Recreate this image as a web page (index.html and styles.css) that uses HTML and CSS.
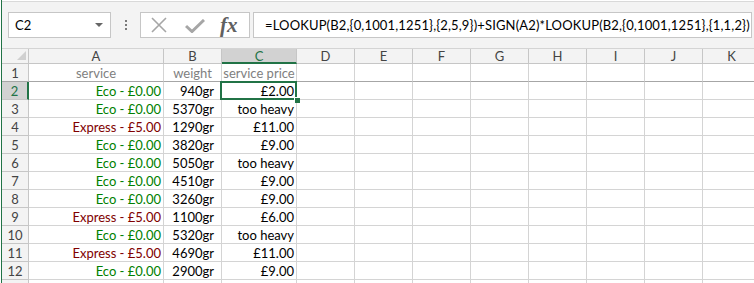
FILE: index.html
```html
<!DOCTYPE html>
<html lang="en">
<head>
    <meta charset="UTF-8">
    <title>Shipping prices</title>
    <link rel="stylesheet" href="styles.css">
</head>
<body>
    <div class="app">
        <div class="toolbar">
            <div class="name-box">
                <span>C2</span>
                <span class="name-arrow"></span>
            </div>
            <div class="grip"><i></i><i></i><i></i></div>
            <div class="fx-box">
                <svg class="icon-cancel" width="18" height="16" viewBox="0 0 18 16">
                    <path d="M2 1 L16 15 M16 1 L2 15" stroke="#a6a6a6" stroke-width="1.6" fill="none"/>
                </svg>
                <svg class="icon-enter" width="20" height="14" viewBox="0 0 20 14">
                    <path d="M1 7 L7 12.5 L19 1" stroke="#a6a6a6" stroke-width="3" fill="none"/>
                </svg>
                <span class="fx">fx</span>
            </div>
            <div class="formula">=LOOKUP(B2,{0,1001,1251},{2,5,9})+SIGN(A2)*LOOKUP(B2,{0,1001,1251},{1,1,2})</div>
        </div>

        <div class="sheet">
            <!-- column headers -->
            <div class="cell corner"><span class="corner-mark"></span></div>
            <div class="cell col-head">A</div>
            <div class="cell col-head">B</div>
            <div class="cell col-head active">C</div>
            <div class="cell col-head">D</div>
            <div class="cell col-head">E</div>
            <div class="cell col-head">F</div>
            <div class="cell col-head">G</div>
            <div class="cell col-head">H</div>
            <div class="cell col-head">I</div>
            <div class="cell col-head">J</div>
            <div class="cell col-head">K</div>

            <!-- title row -->
            <div class="cell row-head freeze">1</div>
            <div class="cell title freeze">service</div>
            <div class="cell title freeze">weight</div>
            <div class="cell title freeze">service price</div>
            <div class="cell freeze"></div><div class="cell freeze"></div><div class="cell freeze"></div><div class="cell freeze"></div>
            <div class="cell freeze"></div><div class="cell freeze"></div><div class="cell freeze"></div><div class="cell freeze"></div>
        </div>
    </div>

    <script>
        var rows = [
            ['eco', 940, '£2.00'],
            ['eco', 5370, 'too heavy'],
            ['express', 1290, '£11.00'],
            ['eco', 3820, '£9.00'],
            ['eco', 5050, 'too heavy'],
            ['eco', 4510, '£9.00'],
            ['eco', 3260, '£9.00'],
            ['express', 1100, '£6.00'],
            ['eco', 5320, 'too heavy'],
            ['express', 4690, '£11.00'],
            ['eco', 2900, '£9.00']
        ];

        var sheet = document.querySelector('.sheet');
        var html = '';

        rows.forEach(function(row, i) {
            var num = i + 2;
            var service = row[0] === 'eco' ? 'Eco - £0.00' : 'Express - £5.00';
            html += '<div class="cell row-head' + (num === 2 ? ' active' : '') + '">' + num + '</div>';
            html += '<div class="cell service ' + row[0] + '">' + service + '</div>';
            html += '<div class="cell weight">' + row[1] + 'gr</div>';
            html += '<div class="cell price' + (num === 2 ? ' selected' : '') + '">' + row[2] + '</div>';
            for (var c = 0; c < 8; c++) {
                html += '<div class="cell"></div>';
            }
        });

        // top edge of the next row, label hidden below the window
        html += '<div class="cell row-head"></div>';
        for (var c = 0; c < 11; c++) {
            html += '<div class="cell"></div>';
        }

        sheet.insertAdjacentHTML('beforeend', html);
    </script>
</body>
</html>
```

FILE: styles.css
```css
body {
    margin: 0;
    background-color: #ffffff;
    font-family: Lato, "Open Sans", sans-serif;
    font-size: 13px;
    color: #000000;
    overflow: hidden;
}
.app {
    margin-left: 1px;
    border-left: 1px solid #217346;
    height: 100vh;
    overflow: hidden;
}

/* formula bar */
.toolbar {
    display: flex;
    align-items: flex-start;
    box-sizing: border-box;
    height: 48px;
    margin-top: 1px;
    padding-top: 10px;
    background-color: #f3f3f3;
    border-top: 1px solid #d9d9d9;
    border-bottom: 1px solid #d4d4d4;
}
.name-box {
    display: flex;
    align-items: center;
    justify-content: space-between;
    box-sizing: border-box;
    width: 103px;
    height: 26px;
    margin-left: 6px;
    padding: 0 7px 0 6px;
    background-color: #ffffff;
    border: 1px solid #c6c6c6;
}
.name-arrow {
    width: 0;
    height: 0;
    border-left: 4px solid transparent;
    border-right: 4px solid transparent;
    border-top: 4px solid #666666;
}
.grip {
    display: flex;
    flex-direction: column;
    gap: 2px;
    width: 2px;
    margin: 8px 13px 0 14px;
}
.grip i {
    display: block;
    width: 2px;
    height: 2px;
    background-color: #7a7a7a;
}
.fx-box {
    display: flex;
    align-items: center;
    box-sizing: border-box;
    width: 110px;
    height: 26px;
    padding-left: 9px;
    background-color: #ffffff;
    border: 1px solid #c6c6c6;
}
.icon-enter {
    margin-left: 17px;
    margin-top: 2px;
}
.fx {
    margin-left: 15px;
    font-family: "Liberation Serif", serif;
    font-style: italic;
    font-weight: bold;
    font-size: 21px;
    color: #606060;
}
.formula {
    flex: 1;
    box-sizing: border-box;
    height: 26px;
    margin: 0 2px 0 3px;
    padding-left: 11px;
    line-height: 24px;
    letter-spacing: 0.15px;
    white-space: nowrap;
    overflow: hidden;
    background-color: #ffffff;
    border: 1px solid #c6c6c6;
}

/* grid */
.sheet {
    display: grid;
    grid-template-columns: 27px 135px 58px 75px repeat(8, 58px);
    grid-template-rows: 15px;
    grid-auto-rows: 18px;
}
.cell {
    box-sizing: border-box;
    border-right: 1px solid #d4d4d4;
    border-bottom: 1px solid #d4d4d4;
    line-height: 18px;
    white-space: nowrap;
    overflow: visible;
}
.corner {
    position: relative;
    background-color: #f3f3f3;
    border-color: #c6c6c6;
}
.corner-mark {
    position: absolute;
    right: 2px;
    bottom: 3px;
    width: 0;
    height: 0;
    border-left: 9px solid transparent;
    border-bottom: 9px solid #d0d0d0;
}
.col-head {
    background-color: #f3f3f3;
    border-color: #c6c6c6;
    text-align: center;
    line-height: 15px;
    color: #444444;
}
.row-head {
    background-color: #f3f3f3;
    border-color: #c6c6c6;
    text-align: center;
    color: #444444;
}
.col-head.active {
    background-color: #d2d2d2;
    border-bottom: 2px solid #217346;
    color: #217346;
}
.row-head.active {
    background-color: #d2d2d2;
    border-right: 2px solid #217346;
    color: #217346;
}
.freeze {
    border-bottom-color: #a6a6a6;
}
.title {
    text-align: center;
    color: #808080;
}
.service {
    text-align: right;
    padding-right: 2px;
}
.eco {
    color: #008000;
}
.express {
    color: #800000;
}
.weight {
    text-align: right;
    padding-right: 7px;
}
.price {
    text-align: right;
    padding-right: 2px;
}
.selected {
    position: relative;
}
.selected::after {
    content: "";
    position: absolute;
    left: -2px;
    top: -1px;
    right: -1px;
    bottom: -1px;
    border: 2px solid #217346;
}
.selected::before {
    content: "";
    position: absolute;
    right: -4px;
    bottom: -4px;
    width: 5px;
    height: 5px;
    background-color: #217346;
    border-left: 1px solid #ffffff;
    border-top: 1px solid #ffffff;
    z-index: 1;
}
```
